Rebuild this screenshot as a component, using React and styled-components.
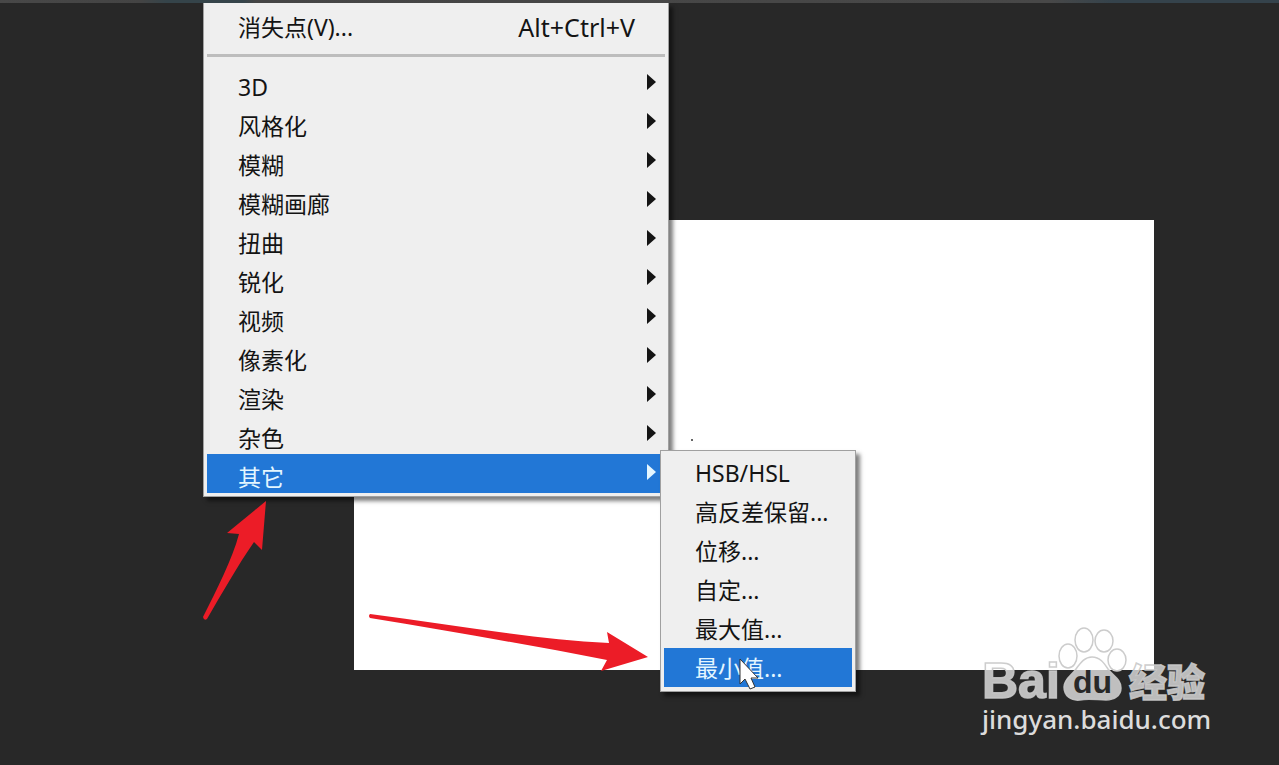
import styled, { createGlobalStyle } from "styled-components";

const filterItems = [
  "3D",
  "风格化",
  "模糊",
  "模糊画廊",
  "扭曲",
  "锐化",
  "视频",
  "像素化",
  "渲染",
  "杂色",
  "其它",
];

const otherItems = [
  "HSB/HSL",
  "高反差保留...",
  "位移...",
  "自定...",
  "最大值...",
  "最小值...",
];

function FilterMenu() {
  return (
    <StyledFilterMenu role="menu" aria-label="滤镜">
      <StyledItem role="menuitem">
        <span>消失点(V)...</span>
        <StyledShortcut>Alt+Ctrl+V</StyledShortcut>
      </StyledItem>
      <StyledSeparator />
      {filterItems.map((item) => (
        <StyledItem
          key={item}
          role="menuitem"
          aria-haspopup="menu"
          $active={item === "其它"}
          $submenu
        >
          <span>{item}</span>
          <StyledTriangle viewBox="0 0 9 16" aria-hidden="true">
            <path d="M0 0L9 8L0 16Z" fill="currentColor" />
          </StyledTriangle>
        </StyledItem>
      ))}
    </StyledFilterMenu>
  );
}

function OtherMenu() {
  return (
    <StyledOtherMenu role="menu" aria-label="其它">
      {otherItems.map((item) => (
        <StyledItem key={item} role="menuitem" $active={item === "最小值..."}>
          <span>{item}</span>
        </StyledItem>
      ))}
    </StyledOtherMenu>
  );
}

function Annotations() {
  return (
    <StyledAnnotations viewBox="0 0 900 762" aria-hidden="true">
      <g fill="#ec1c27">
        <path d="M266 498L227 530L239 531C232 557 217 586 203 614Q204 618 207 616C221 592 238 562 254 539L262 547Z" />
        <path d="M648 654L607 629L609 640C530 636 450 621 370 611Q368 613 370 615C450 628 530 642 607 657L601 668Z" />
      </g>
      <circle cx="692" cy="437" r="1" fill="#333" />
      <path
        d="M740 656V681L745 676L750 686L755 684L751 675H758Z"
        fill="#fff"
        stroke="#333"
        strokeWidth="1"
      />
    </StyledAnnotations>
  );
}

function Watermark() {
  return (
    <StyledWatermark>
      <StyledLogo viewBox="0 0 230 74" role="img" aria-label="Bai du 经验">
        <g fill="#fff" stroke="#ccc" strokeWidth="1.5">
          <ellipse cx="86" cy="29" rx="9" ry="12" />
          <ellipse cx="102" cy="13" rx="9" ry="12" />
          <ellipse cx="122" cy="14" rx="9" ry="11" />
          <ellipse cx="135" cy="33" rx="9" ry="11" />
        </g>
        <g
          fill="#fff"
          fillOpacity="0.7"
          stroke="#c8c8c8"
          strokeOpacity="0.9"
          strokeWidth="1.5"
        >
          <path d="M110 30C118 30 122 36 126 42C131 49 139 52 139 61C139 69 132 73 124 73C116 73 106 71 98 73C89 74 82 69 82 60C82 52 90 48 94 42C99 35 103 30 110 30Z" />
          <LogoLatin x="0" y="71">
            Bai
          </LogoLatin>
          <LogoHan x="147" y="69">
            经验
          </LogoHan>
        </g>
        <LogoDu x="91" y="66">
          du
        </LogoDu>
      </StyledLogo>
      <StyledSite href="#">jingyan.baidu.com</StyledSite>
    </StyledWatermark>
  );
}

export default function App() {
  return (
    <>
      <GlobalStyle />
      <StyledTopEdge />
      <StyledWorkspace>
        <StyledDocument />
        <FilterMenu />
        <OtherMenu />
        <Annotations />
        <Watermark />
      </StyledWorkspace>
    </>
  );
}

const GlobalStyle = createGlobalStyle`
  * {
    box-sizing: border-box;
  }

  body {
    margin: 0;
    background: #282828;
    font-family: "Noto Sans", "Noto Sans CJK SC", sans-serif;
  }
`;

const StyledTopEdge = styled.div`
  height: 3px;
  background: linear-gradient(
    90deg,
    #484848 0%,
    #444 11%,
    #35444a 13%,
    #35444a 19%,
    #454545 20%,
    #484848 82%,
    #35434c 87%,
    #35434c 100%
  );
`;

const StyledWorkspace = styled.main`
  position: relative;
  min-height: calc(100vh - 3px);
  padding: 217px 125px 95px 354px;
  overflow: hidden;
  background: #282828;
`;

const StyledDocument = styled.section`
  height: 450px;
  background: #fff;
`;

const StyledMenu = styled.div`
  position: absolute;
  display: flex;
  flex-direction: column;
  border: 1px solid #a0a0a0;
  background: #efefef;
  box-shadow: 4px 4px 4px rgba(0, 0, 0, 0.5);
`;

const StyledFilterMenu = styled(StyledMenu)`
  top: 0;
  left: 203px;
  width: 466px;
  padding: 4px 3px 3px;
  border-top: 0;
`;

const StyledOtherMenu = styled(StyledMenu)`
  top: 447px;
  left: 660px;
  width: 196px;
  padding: 2px 3px 4px;
`;

const StyledItem = styled.button`
  display: flex;
  align-items: center;
  justify-content: space-between;
  height: 39px;
  padding: ${(props) => (props.$submenu ? "6px 9px 0 31px" : "0 30px 0 31px")};
  border: 0;
  background: ${(props) => (props.$active ? "#2277d6" : "transparent")};
  color: ${(props) => (props.$active ? "#e4f6ff" : "#141414")};
  font-family: inherit;
  font-size: 23px;
  line-height: 32px;
  text-align: left;
  white-space: nowrap;
`;

const StyledShortcut = styled.kbd`
  font-family: inherit;
  font-size: 25px;
`;

const StyledSeparator = styled.hr`
  width: 100%;
  height: 3px;
  margin: 8px 0 7px;
  border: 0;
  background: #bdbdbd;
`;

const StyledTriangle = styled.svg`
  width: 9px;
  height: 16px;
  margin-bottom: 9px;
`;

const StyledAnnotations = styled.svg`
  position: absolute;
  top: 0;
  left: 0;
  width: 900px;
  height: 762px;
  pointer-events: none;
`;

const StyledWatermark = styled.div`
  position: absolute;
  right: 67px;
  bottom: 28px;
  display: flex;
  flex-direction: column;
  width: 230px;
`;

const StyledLogo = styled.svg`
  width: 230px;
  height: 74px;
  overflow: visible;
`;

const LogoLatin = styled.text`
  font: bold 50px "Liberation Sans", sans-serif;
`;

const LogoHan = styled.text`
  font: 900 38px "Noto Sans CJK SC", sans-serif;
`;

const LogoDu = styled.text`
  fill: #282828;
  font: bold 32px "Liberation Sans", sans-serif;
`;

const StyledSite = styled.a`
  color: #dcdcdc;
  font-family: "Noto Sans", sans-serif;
  font-size: 26px;
  font-weight: 500;
  line-height: 36px;
  text-decoration: none;
`;
